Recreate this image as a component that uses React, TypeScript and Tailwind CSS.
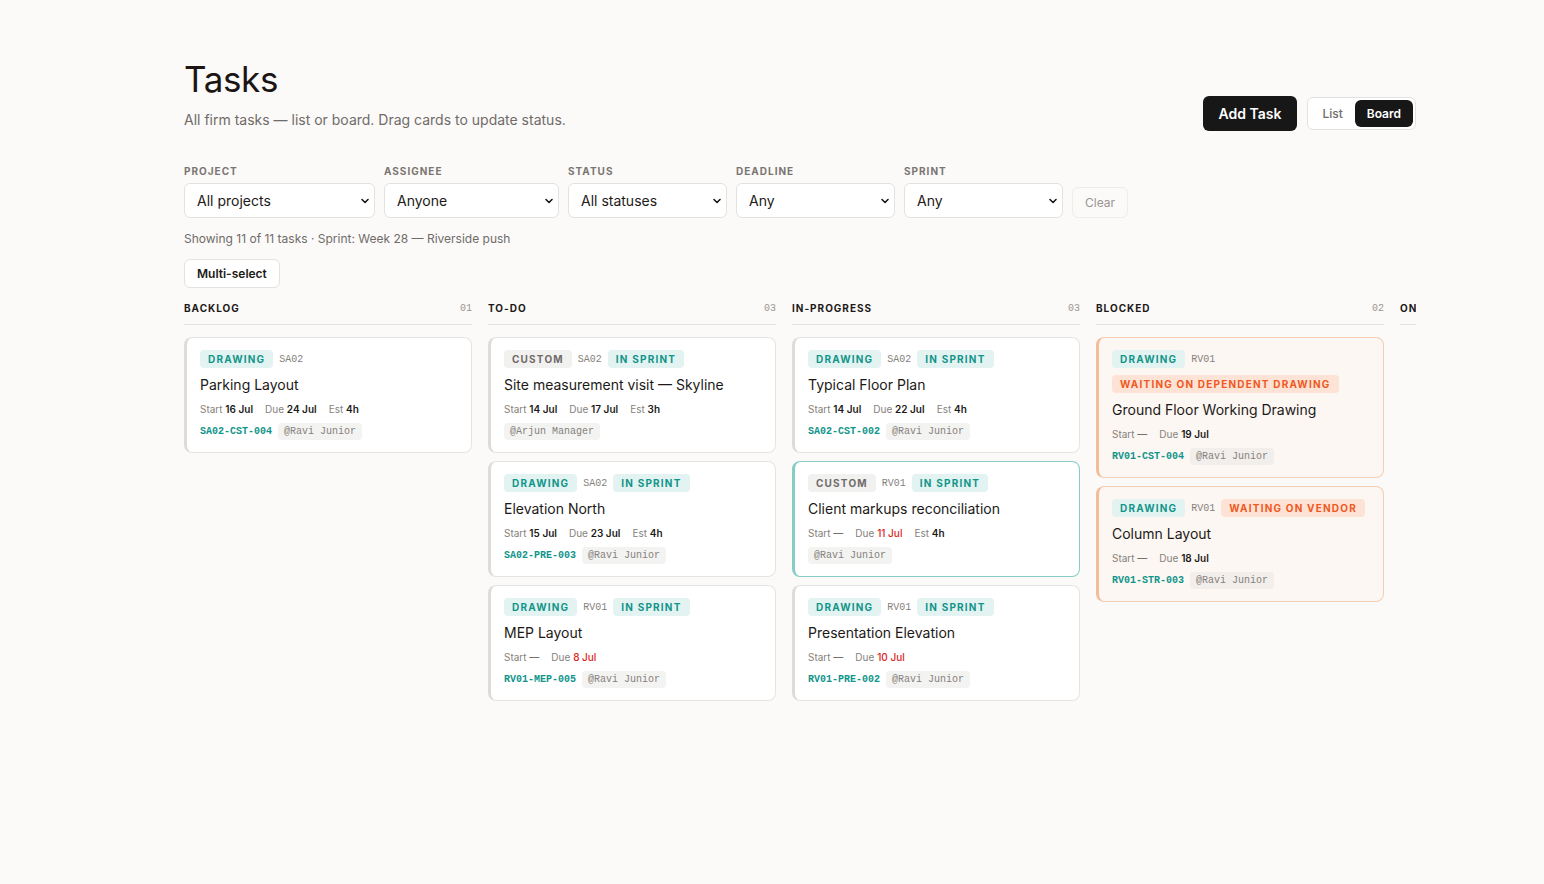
import { ChevronDown } from "lucide-react";

type Chip = { label: string; tone: "teal" | "gray" | "orange" };

type Task = {
  title: string;
  chips: Chip[];
  project: string;
  extraChips?: Chip[];
  afterProject?: Chip[];
  start?: string;
  due: string;
  dueLate?: boolean;
  est?: string;
  code?: string;
  who: string;
  variant?: "default" | "active" | "blocked";
};

const sans = "font-['Inter','Noto_Sans',sans-serif]";
const mono = "font-['Liberation_Mono','DejaVu_Sans_Mono',monospace]";

const columns: { name: string; count: string; tasks: Task[] }[] = [
  {
    name: "BACKLOG",
    count: "01",
    tasks: [
      {
        title: "Parking Layout",
        chips: [{ label: "DRAWING", tone: "teal" }],
        project: "SA02",
        start: "16 Jul",
        due: "24 Jul",
        est: "4h",
        code: "SA02-CST-004",
        who: "@Ravi Junior",
      },
    ],
  },
  {
    name: "TO-DO",
    count: "03",
    tasks: [
      {
        title: "Site measurement visit — Skyline",
        chips: [{ label: "CUSTOM", tone: "gray" }],
        project: "SA02",
        afterProject: [{ label: "IN SPRINT", tone: "teal" }],
        start: "14 Jul",
        due: "17 Jul",
        est: "3h",
        who: "@Arjun Manager",
      },
      {
        title: "Elevation North",
        chips: [{ label: "DRAWING", tone: "teal" }],
        project: "SA02",
        afterProject: [{ label: "IN SPRINT", tone: "teal" }],
        start: "15 Jul",
        due: "23 Jul",
        est: "4h",
        code: "SA02-PRE-003",
        who: "@Ravi Junior",
      },
      {
        title: "MEP Layout",
        chips: [{ label: "DRAWING", tone: "teal" }],
        project: "RV01",
        afterProject: [{ label: "IN SPRINT", tone: "teal" }],
        due: "8 Jul",
        dueLate: true,
        code: "RV01-MEP-005",
        who: "@Ravi Junior",
      },
    ],
  },
  {
    name: "IN-PROGRESS",
    count: "03",
    tasks: [
      {
        title: "Typical Floor Plan",
        chips: [{ label: "DRAWING", tone: "teal" }],
        project: "SA02",
        afterProject: [{ label: "IN SPRINT", tone: "teal" }],
        start: "14 Jul",
        due: "22 Jul",
        est: "4h",
        code: "SA02-CST-002",
        who: "@Ravi Junior",
      },
      {
        title: "Client markups reconciliation",
        chips: [{ label: "CUSTOM", tone: "gray" }],
        project: "RV01",
        afterProject: [{ label: "IN SPRINT", tone: "teal" }],
        due: "11 Jul",
        dueLate: true,
        est: "4h",
        who: "@Ravi Junior",
        variant: "active",
      },
      {
        title: "Presentation Elevation",
        chips: [{ label: "DRAWING", tone: "teal" }],
        project: "RV01",
        afterProject: [{ label: "IN SPRINT", tone: "teal" }],
        due: "10 Jul",
        dueLate: true,
        code: "RV01-PRE-002",
        who: "@Ravi Junior",
      },
    ],
  },
  {
    name: "BLOCKED",
    count: "02",
    tasks: [
      {
        title: "Ground Floor Working Drawing",
        chips: [{ label: "DRAWING", tone: "teal" }],
        project: "RV01",
        extraChips: [{ label: "WAITING ON DEPENDENT DRAWING", tone: "orange" }],
        due: "19 Jul",
        code: "RV01-CST-004",
        who: "@Ravi Junior",
        variant: "blocked",
      },
      {
        title: "Column Layout",
        chips: [{ label: "DRAWING", tone: "teal" }],
        project: "RV01",
        afterProject: [{ label: "WAITING ON VENDOR", tone: "orange" }],
        due: "18 Jul",
        code: "RV01-STR-003",
        who: "@Ravi Junior",
        variant: "blocked",
      },
    ],
  },
  { name: "ON HOLD", count: "00", tasks: [] },
];

const toneClass: Record<Chip["tone"], string> = {
  teal: "bg-[#e3f3f1] text-[#11958a]",
  gray: "bg-[#f1f1f0] text-[#6f6b68]",
  orange: "bg-[#fce3d5] text-[#f0581f]",
};

function Tag({ chip }: { chip: Chip }) {
  return (
    <span
      className={`inline-flex h-[18px] items-center rounded px-2 text-[10px] font-bold tracking-[0.12em] ${toneClass[chip.tone]}`}
    >
      {chip.label}
    </span>
  );
}

function Filter({ label, value, width }: { label: string; value: string; width: string }) {
  return (
    <div className="flex flex-col gap-[5px]">
      <span className="text-[10px] font-bold leading-[14px] tracking-[0.1em] text-[#7a7570]">{label}</span>
      <div
        className={`flex h-[35px] items-center justify-between rounded-md border border-[#e4e2e0] bg-white pl-3 pr-[3px] text-[14px] text-[#1c1917] ${width}`}
      >
        <span>{value}</span>
        <ChevronDown size={12} strokeWidth={3.2} className="text-[#1c1917]" />
      </div>
    </div>
  );
}

function Card({ task }: { task: Task }) {
  const variant = task.variant ?? "default";
  const shell =
    variant === "blocked"
      ? "bg-[#fcf7f3] border-[#f5cdb2] border-l-[#f4bc98]"
      : variant === "active"
        ? "bg-white border-[#86cdc5] border-l-[#86cdc5]"
        : "bg-white border-[#e6e4e2] border-l-[#dedcda]";
  const whoBg = variant === "blocked" ? "bg-[#f2eeeb]" : "bg-[#f3f3f2]";
  return (
    <div className={`rounded-lg border border-l-[3px] pb-3 pl-[13px] pr-4 pt-3 ${shell}`}>
      <div className="flex items-center gap-[6px]">
        {task.chips.map((c) => (
          <Tag key={c.label} chip={c} />
        ))}
        <span className={`${mono} text-[10px] text-[#86817c]`}>{task.project}</span>
        {task.afterProject?.map((c) => (
          <Tag key={c.label} chip={c} />
        ))}
      </div>
      {task.extraChips && (
        <div className="mt-[7px] flex">
          {task.extraChips.map((c) => (
            <Tag key={c.label} chip={c} />
          ))}
        </div>
      )}
      <div className="mt-[7px] text-[14px] leading-5 text-[#1c1917]">{task.title}</div>
      <div className="mt-[7px] flex items-center gap-3 text-[10px] leading-[14px] text-[#86817c]">
        <span>
          Start{" "}
          {task.start ? <span className="font-semibold text-[#1c1917]">{task.start}</span> : <span className="text-[#57534e]">—</span>}
        </span>
        <span>
          Due{" "}
          <span className={task.dueLate ? "font-medium text-[#dc2626]" : "font-semibold text-[#1c1917]"}>
            {task.due}
          </span>
        </span>
        {task.est && (
          <span>
            Est <span className="font-semibold text-[#1c1917]">{task.est}</span>
          </span>
        )}
      </div>
      <div className="mt-[7px] flex items-center gap-[6px]">
        {task.code && <span className={`${mono} text-[10px] font-bold text-[#11958a]`}>{task.code}</span>}
        <span className={`${mono} flex h-[17px] items-center rounded px-1.5 text-[10px] text-[#86817c] ${whoBg}`}>
          {task.who}
        </span>
      </div>
    </div>
  );
}

export default function App() {
  return (
    <div className={`${sans} min-h-screen bg-[#fbfaf9] pb-40 pl-[184px] pr-[128px] pt-[57px] text-[#1c1917]`}>
      <div className="flex items-end justify-between">
        <div>
          <h1 className="text-[35px] font-normal leading-[44px] tracking-[-0.01em] text-[#1c1514]">Tasks</h1>
          <p className="mt-[9px] text-[14px] leading-5 text-[#6f6b68]">
            All firm tasks — list or board. Drag cards to update status.
          </p>
        </div>
        <div className="mb-[-1px] flex items-center gap-[10px]">
          <button className="h-[35px] rounded-md bg-[#171717] px-4 text-[14px] font-semibold text-white">Add Task</button>
          <div className="flex h-[33px] items-center rounded-md border border-[#e4e2e0] bg-white p-[2px]">
            <span className="px-[12px] text-[12px] font-medium text-[#6f6b68]">List</span>
            <span className="flex h-[27px] items-center rounded-md bg-[#171717] px-3 text-[12px] font-semibold text-white">
              Board
            </span>
          </div>
        </div>
      </div>

      <div className="mt-[34px] flex items-end gap-[9px]">
        <Filter label="PROJECT" value="All projects" width="w-[191px]" />
        <Filter label="ASSIGNEE" value="Anyone" width="w-[175px]" />
        <Filter label="STATUS" value="All statuses" width="w-[159px]" />
        <Filter label="DEADLINE" value="Any" width="w-[159px]" />
        <Filter label="SPRINT" value="Any" width="w-[159px]" />
        <button className="h-[31px] rounded-md border border-[#efedeb] bg-[#fbfaf9] px-3 text-[12px] text-[#9a9591]">
          Clear
        </button>
      </div>

      <p className="mt-[13px] text-[12px] leading-4 text-[#6f6b68]">Showing 11 of 11 tasks · Sprint: Week 28 — Riverside push</p>

      <button className="mt-3 h-[29px] rounded-md border border-[#e4e2e0] bg-white px-3 text-[12px] font-semibold text-[#1c1917]">
        Multi-select
      </button>

      <div className="mt-3 flex gap-4 overflow-hidden">
        {columns.map((col) => (
          <div key={col.name} className="w-[288px] shrink-0">
            <div className="flex items-center justify-between border-b border-[#e4e2e0] pb-2">
              <span className="text-[10px] font-bold leading-4 tracking-[0.1em] text-[#1c1917]">{col.name}</span>
              <span className={`${mono} text-[10px] text-[#9a9591]`}>{col.count}</span>
            </div>
            <div className="mt-3 flex flex-col gap-2">
              {col.tasks.map((t) => (
                <Card key={t.title} task={t} />
              ))}
            </div>
          </div>
        ))}
      </div>
    </div>
  );
}
